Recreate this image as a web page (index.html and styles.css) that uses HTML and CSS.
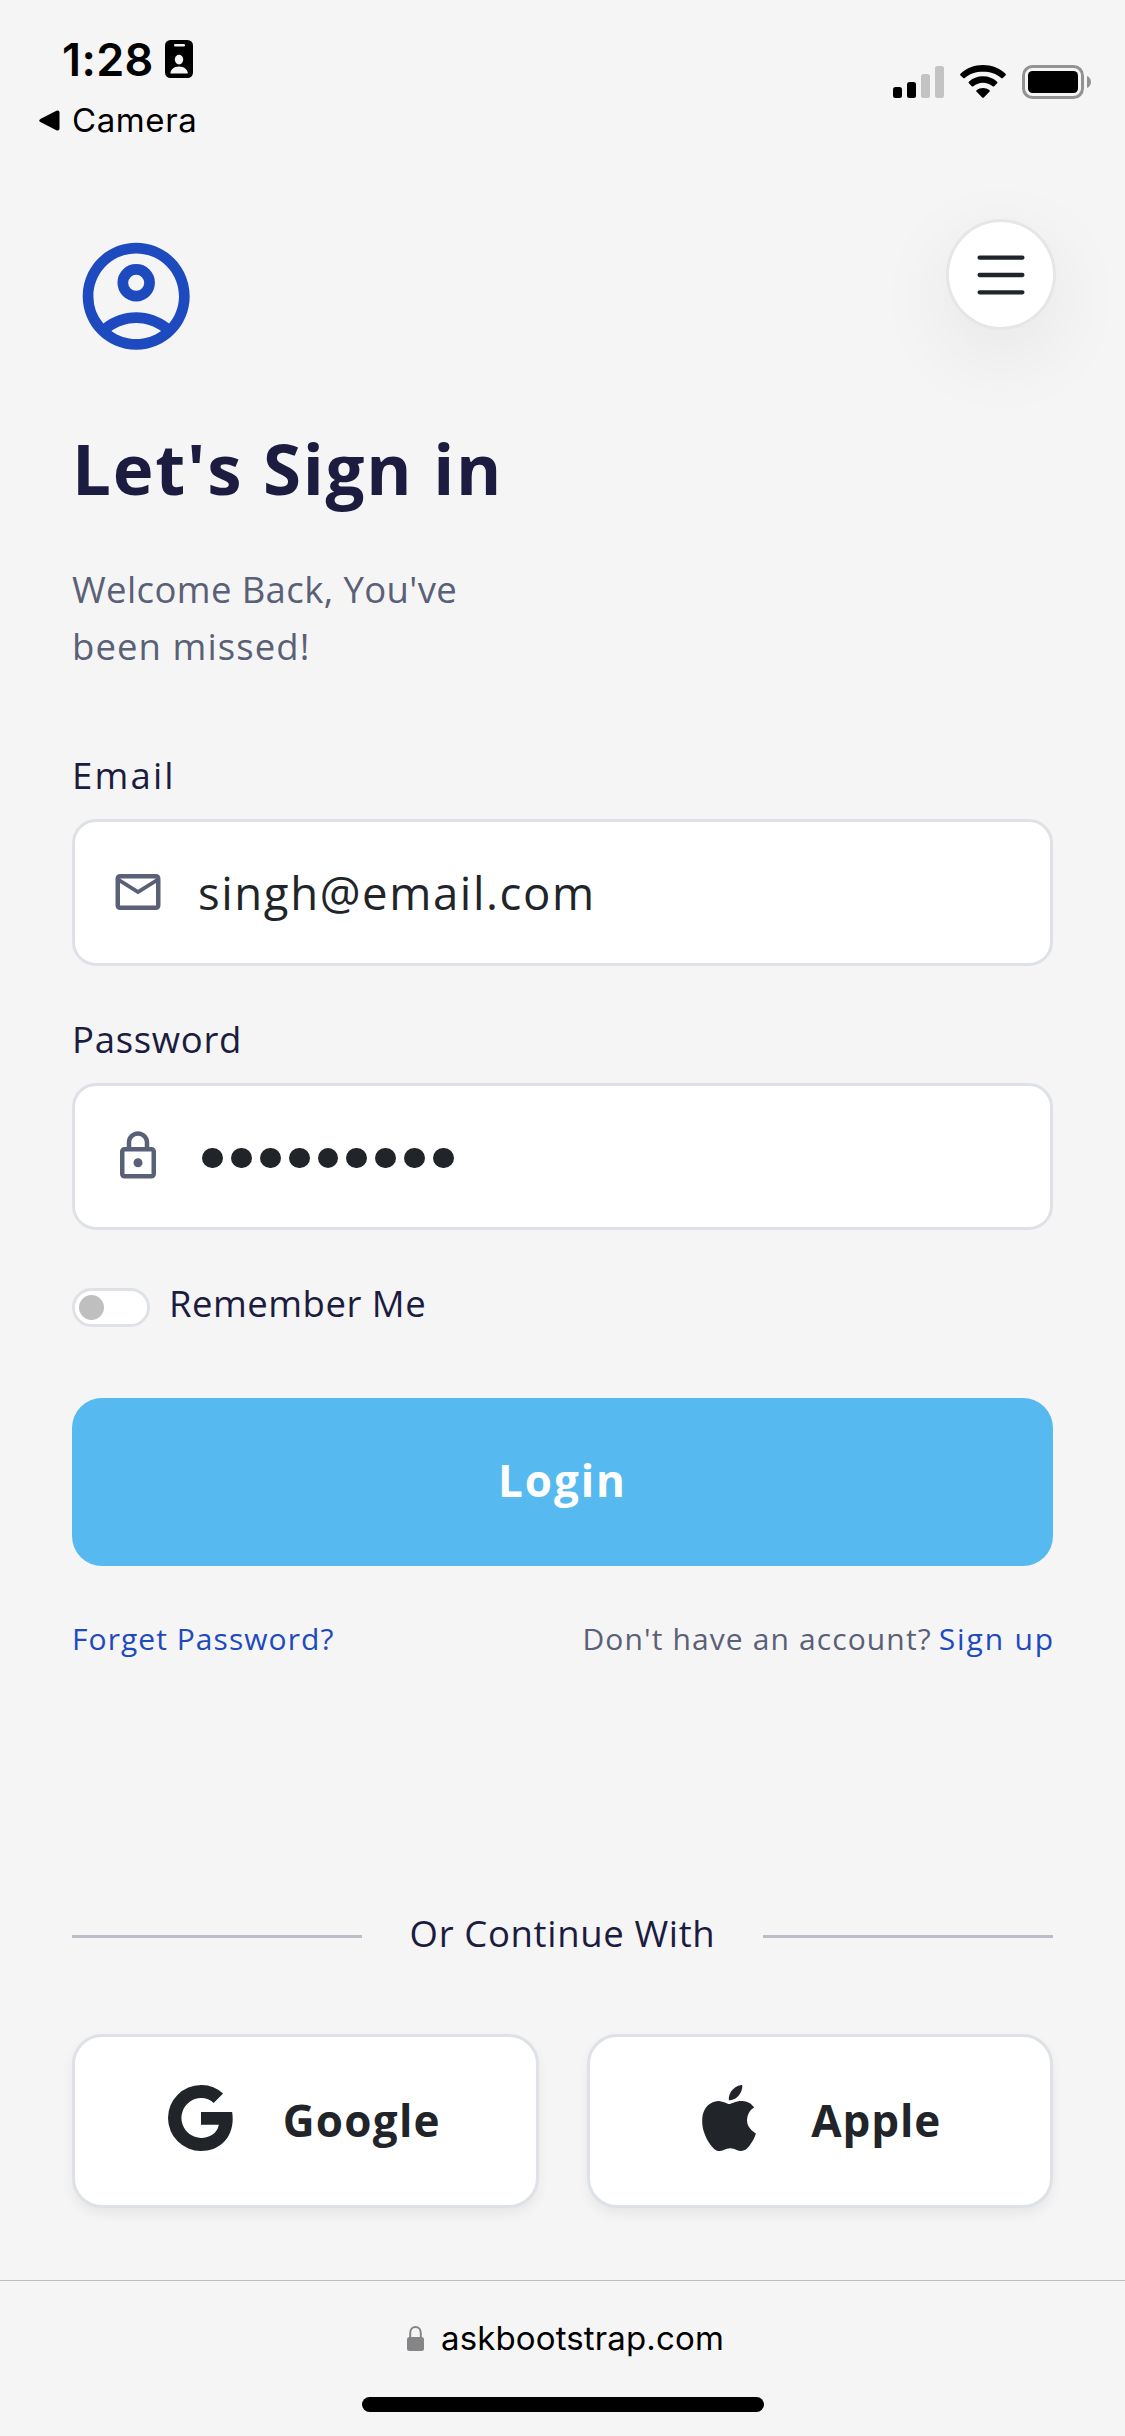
FILE: index.html
```html
<!DOCTYPE html>
<html lang="en">
<head>
<meta charset="utf-8">
<title>Sign in</title>
<link rel="stylesheet" href="styles.css">
</head>
<body>
<header class="status">
  <div class="status-left">
    <div class="clock">
      <span class="time">1:28</span>
      <svg width="28" height="38" viewBox="0 0 28 38"><rect width="28" height="38" rx="5.5"/><rect x="9" y="4" width="11" height="2.6" rx="1.3" fill="#f5f5f5"/><ellipse cx="14" cy="19.6" rx="4.2" ry="4.8" fill="#f5f5f5"/><path d="M5.4 33.5c0-4.2 3.8-7 8.6-7s8.8 2.800 8.800 7z" fill="#f5f5f5"/></svg>
    </div>
    <div class="back">
      <svg width="21" height="21" viewBox="0 0 21 21"><path d="M1.800 8.700 17.400.8Q20.500-.3 20.500 2.600v15.800q0 2.900-3.100 1.800L1.800 12.300q-3.200-1.800 0-3.600z"/></svg>
      <span>Camera</span>
    </div>
  </div>
  <div class="status-right">
    <svg width="51" height="32" viewBox="0 0 51 32"><rect y="21" width="9" height="11" rx="2.500"/><rect x="14" y="16" width="9" height="16" rx="2.500"/><rect x="28" y="8" width="9" height="24" rx="2.500" fill="#c3c3c3"/><rect x="42" width="9" height="32" rx="2.500" fill="#c3c3c3"/></svg>
    <svg class="wifi" width="46" height="33" viewBox="0 0 46 33"><path d="M23 0C14.300 0 6.300 3.300.5 8.800q-.8.800 0 1.600l2.700 2.600q.8.700 1.600 0C9.700 8.600 16 6.700 23 6.700s13.300 1.900 18.200 6.300q.8.700 1.600 0l2.700-2.600q.8-.8 0-1.600C39.700 3.300 31.700 0 23 0z"/><path d="M23 11.300c-5.400 0-10.300 2-14.100 5.400q-.8.800 0 1.600l2.900 2.900q.7.700 1.600 0c2.700-2.200 6-3.400 9.600-3.400s6.900 1.200 9.600 3.400q.9.700 1.600 0l2.900-2.900q.8-.8 0-1.600C33.300 13.300 28.400 11.300 23 11.300z"/><path d="M23 23c-2.400 0-4.600.8-6.300 2.100q-.9.800-.1 1.600l5.600 5.700q.8.800 1.600 0l5.600-5.700q.8-.8-.1-1.600C27.600 23.800 25.400 23 23 23z"/></svg>
    <svg width="69" height="34" viewBox="0 0 69 34"><rect x="1.500" y="1.500" width="59" height="31" rx="9" fill="none" stroke="#929292" stroke-width="3"/><rect x="6" y="6" width="50" height="22" rx="4.500"/><path d="M65 11c5.300 2 5.300 10 0 12z" fill="#929292"/></svg>
  </div>
</header>

<main class="page">
  <div class="top">
    <svg class="avatar" viewBox="0 0 24 24"><path d="M12 2C6.480 2 2 6.480 2 12s4.480 10 10 10 10-4.480 10-10S17.520 2 12 2zM7.350 18.500C8.660 17.560 10.260 17 12 17s3.340.56 4.650 1.500C15.340 19.440 13.740 20 12 20s-3.340-.56-4.650-1.500zm10.790-1.380C16.450 15.800 14.320 15 12 15s-4.450.8-6.140 2.120A7.950 7.950 0 0 1 4 12c0-4.420 3.580-8 8-8s8 3.580 8 8c0 1.950-.7 3.730-1.860 5.120z" fill-rule="evenodd"/><circle cx="12" cy="9.500" r="2.500" fill="none" stroke="#1e4abf" stroke-width="2"/></svg>
    <button class="menu" aria-label="Menu">
      <svg width="48" height="40" viewBox="0 0 48 40" fill="none" stroke="#212529" stroke-width="4.300" stroke-linecap="round"><path d="M2.600 2.700h42.800M2.600 20h42.800M2.600 37.300h42.800"/></svg>
    </button>
  </div>

  <h1 class="title">Let's Sign in</h1>
  <p class="lead"><span class="l1">Welcome Back, You've</span><br><span class="l2">been missed!</span></p>

  <form>
    <label class="label label-email" for="email">Email</label>
    <div class="field">
      <svg class="icon" viewBox="0 0 24 24"><path d="M22 6c0-1.100-.9-2-2-2H4c-1.100 0-2 .9-2 2v12c0 1.100.9 2 2 2h16c1.100 0 2-.9 2-2V6zm-2 0-8 5-8-5h16zm0 12H4V8l8 5 8-5v10z"/></svg>
      <input class="input" id="email" type="email" value="singh@email.com">
    </div>

    <div class="label label-password">Password</div>
    <div class="field">
      <svg class="icon" viewBox="0 0 24 24"><path d="M18 8h-1V6c0-2.760-2.240-5-5-5S7 3.240 7 6v2H6c-1.100 0-2 .9-2 2v10c0 1.100.9 2 2 2h12c1.100 0 2-.9 2-2V10c0-1.100-.9-2-2-2zM9 6c0-1.660 1.340-3 3-3s3 1.340 3 3v2H9V6zm9 14H6V10h12v10zm-6-3c1.100 0 2-.9 2-2s-.9-2-2-2-2 .9-2 2 .9 2 2 2z"/></svg>
      <div class="mask"><i></i><i></i><i></i><i></i><i></i><i></i><i></i><i></i><i></i></div>
    </div>

    <div class="remember">
      <span class="switch"><span class="knob"></span></span>
      <span class="remember-text">Remember Me</span>
    </div>

    <button class="login" type="button">Login</button>
  </form>

  <div class="links">
    <a class="forgot">Forget Password?</a>
    <div class="account"><span class="ask">Don't have an account?</span><a class="signup">Sign up</a></div>
  </div>

  <div class="divider"><span class="rule"></span><span class="divider-text">Or Continue With</span><span class="rule"></span></div>

  <div class="social">
    <div class="card">
      <svg class="brand" viewBox="0 0 16 16"><path d="M15.545 6.558a9.420 9.420 0 0 1 .139 1.626c0 2.434-.87 4.492-2.384 5.885h.002C11.978 15.292 10.158 16 8 16A8 8 0 1 1 8 0a7.689 7.689 0 0 1 5.352 2.082l-2.284 2.284A4.347 4.347 0 0 0 8 3.166c-2.087 0-3.860 1.408-4.492 3.304a4.792 4.792 0 0 0 0 3.063h.003c.635 1.893 2.405 3.301 4.492 3.301 1.078 0 2.004-.276 2.722-.764h-.003a3.702 3.702 0 0 0 1.599-2.431H8v-3.080h7.545z"/></svg>
      <span class="google">Google</span>
    </div>
    <div class="card">
      <svg class="brand" viewBox="0 0 16 16"><path d="M11.182.008C11.148-.03 9.923.023 8.857 1.180c-1.066 1.156-.902 2.482-.878 2.516.024.034 1.520.087 2.475-1.258.955-1.345.762-2.391.728-2.430zm3.314 11.733c-.048-.096-2.325-1.234-2.113-3.422.212-2.189 1.675-2.789 1.698-2.854.023-.065-.597-.79-1.254-1.157a3.692 3.692 0 0 0-1.563-.434c-.108-.003-.483-.095-1.254.116-.508.139-1.653.589-1.968.607-.316.018-1.256-.522-2.267-.665-.647-.125-1.333.131-1.824.328-.49.196-1.422.754-2.074 2.237-.652 1.482-.311 3.830-.067 4.560.244.729.625 1.924 1.273 2.796.576.984 1.340 1.667 1.659 1.899.319.232 1.219.386 1.843.067.502-.308 1.408-.485 1.766-.472.357.013 1.061.154 1.782.539.571.197 1.111.115 1.652-.105.541-.221 1.324-1.059 2.238-2.758.347-.79.505-1.217.473-1.282z"/></svg>
      <span class="apple">Apple</span>
    </div>
  </div>
</main>

<footer class="browser">
  <div class="address">
    <svg width="17" height="25" viewBox="0 0 17 25" fill="#858587"><rect y="11" width="17" height="14" rx="2.500"/><path d="M3.200 12V7.200C3.200 3.500 5.400 1 8.500 1s5.300 2.500 5.300 6.200V12" fill="none" stroke="#858587" stroke-width="2"/></svg>
    <span>askbootstrap.com</span>
  </div>
  <div class="home"></div>
</footer>
</body>
</html>
```
FILE: styles.css
```css
* { box-sizing: border-box; }

body {
  margin: 0;
  width: 1125px;
  height: 2436px;
  background: #f5f5f5;
  color: #212529;
  font-family: "Open Sans", sans-serif;
}

svg { display: block; flex: none; }

/* Status bar */
.status {
  display: flex;
  justify-content: space-between;
  height: 219px;
  padding: 35px 34px 0 39px;
  font-family: Inter, sans-serif;
  color: #000;
}
.clock {
  display: flex;
  align-items: center;
  gap: 11px;
  height: 50px;
  padding-left: 23px;
}
.clock svg { margin-top: -2px; }
.time { font-size: 45px; font-weight: 600; line-height: 50px; letter-spacing: 0.400px; }
.back {
  display: flex;
  align-items: center;
  gap: 12px;
  margin-top: 15px;
  font-size: 33px;
  font-weight: 400;
  line-height: 40px;
  letter-spacing: 0.600px;
}
.status-right { display: flex; padding-top: 30px; }
.status-right svg:first-child { margin-top: 1px; }
.wifi { margin: 0 16px; }

/* Page */
.page { padding: 0 72px; }

.top { display: flex; justify-content: space-between; height: 141px; }
.avatar { width: 128.400px; height: 128.400px; margin: 13px 0 0; fill: #1e4abf; }
.menu {
  display: flex;
  align-items: center;
  justify-content: center;
  width: 110px;
  height: 111px;
  margin-right: -3px;
  padding: 0;
  border: 3px solid #e6e6e6;
  border-radius: 50%;
  background: #fff;
  box-shadow: 0 24px 84px rgba(0, 0, 0, 0.070);
}

.title {
  margin: 67px 0 0;
  color: #1b1c3f;
  font-size: 69px;
  font-weight: 700;
  line-height: 83px;
  letter-spacing: 1.780px;
}
.lead {
  margin: 51px 0 0;
  color: #5a6075;
  font-size: 36.500px;
  line-height: 57px;
}
.l1 { letter-spacing: 0.380px; }
.l2 { letter-spacing: 1.080px; }

/* Form */
.label {
  display: block;
  margin-bottom: 16px;
  color: #1b1c3f;
  font-size: 36.500px;
  line-height: 56px;
}
.label-email { margin-top: 72px; letter-spacing: 2.200px; }
.label-password { margin-top: 45px; letter-spacing: 0.700px; }

.field {
  display: flex;
  align-items: center;
  gap: 33px;
  height: 147px;
  padding: 0 36px 2px;
  border: 3px solid #dee2e6;
  border-radius: 24px;
  background: #fff;
}
.icon { width: 54px; height: 54px; fill: #5a6075; }
.input {
  flex: 1;
  min-width: 0;
  padding: 0;
  border: 0;
  outline: 0;
  background: none;
  color: #212529;
  font: 45.500px "Open Sans", sans-serif;
  letter-spacing: 1.600px;
}
.mask { display: flex; gap: 8px; padding: 5px 0 0 4px; }
.mask i { width: 20.900px; height: 20.900px; border-radius: 50%; background: #212529; }

.remember {
  display: flex;
  align-items: flex-start;
  gap: 19px;
  margin-top: 45px;
  color: #1b1c3f;
  font-size: 36.500px;
  line-height: 56px;
  letter-spacing: 0.500px;
}
.switch {
  display: flex;
  align-items: center;
  width: 78px;
  height: 39px;
  margin-top: 13px;
  padding-left: 4px;
  border: 3px solid #dee2e6;
  border-radius: 20px;
  background: #fff;
}
.knob { width: 25px; height: 25px; border-radius: 50%; background: #bfbfbf; }

.login {
  display: block;
  width: 100%;
  height: 168px;
  margin-top: 67px;
  padding: 0 0 5px;
  border: 0;
  border-radius: 30px;
  background: #56b9ef;
  color: #fff;
  font: 700 44px "Open Sans", sans-serif;
  letter-spacing: 1.900px;
}

.links {
  display: flex;
  justify-content: space-between;
  margin-top: 51px;
  font-size: 30px;
  line-height: 44px;
  color: #1e4abf;
}
.forgot { letter-spacing: 1.050px; }
.account { display: flex; margin-right: -2px; }
.ask { margin-right: 7px; color: #5a6075; letter-spacing: 1.120px; }
.signup { letter-spacing: 1.850px; }

.divider {
  display: flex;
  align-items: center;
  justify-content: space-between;
  margin-top: 244px;
  color: #1b1c3f;
  font-size: 36.500px;
  line-height: 56px;
}
.rule { width: 290px; height: 3px; margin-top: 7px; background: #bdbcc7; }
.divider-text { letter-spacing: 0.650px; }

.social { display: grid; grid-template-columns: 1fr 1fr; gap: 48px; margin-top: 73px; }
.card {
  display: flex;
  align-items: center;
  justify-content: center;
  gap: 49px;
  height: 174px;
  padding: 0 2px 6px 0;
  border: 3px solid #dee2e6;
  border-radius: 30px;
  background: #fff;
  box-shadow: 0 6px 12px rgba(0, 0, 0, 0.060);
  font-size: 44px;
  font-weight: 700;
}
.brand { width: 66px; height: 66px; fill: #212529; }
.google { padding-top: 3px; letter-spacing: 1.270px; }
.apple { padding-top: 3px; letter-spacing: 0.880px; }

/* Browser bar */
.browser {
  margin-top: 72px;
  border-top: 1px solid #bcbcbc;
  padding-top: 37px;
  color: #000;
  font-family: Inter, sans-serif;
}
.address {
  display: flex;
  align-items: center;
  justify-content: center;
  gap: 17px;
  padding-left: 6px;
  font-size: 33px;
  line-height: 40px;
  letter-spacing: 0.140px;
}
.home { width: 402px; height: 15px; margin: 39px auto 0; border-radius: 8px; background: #000; }
```
